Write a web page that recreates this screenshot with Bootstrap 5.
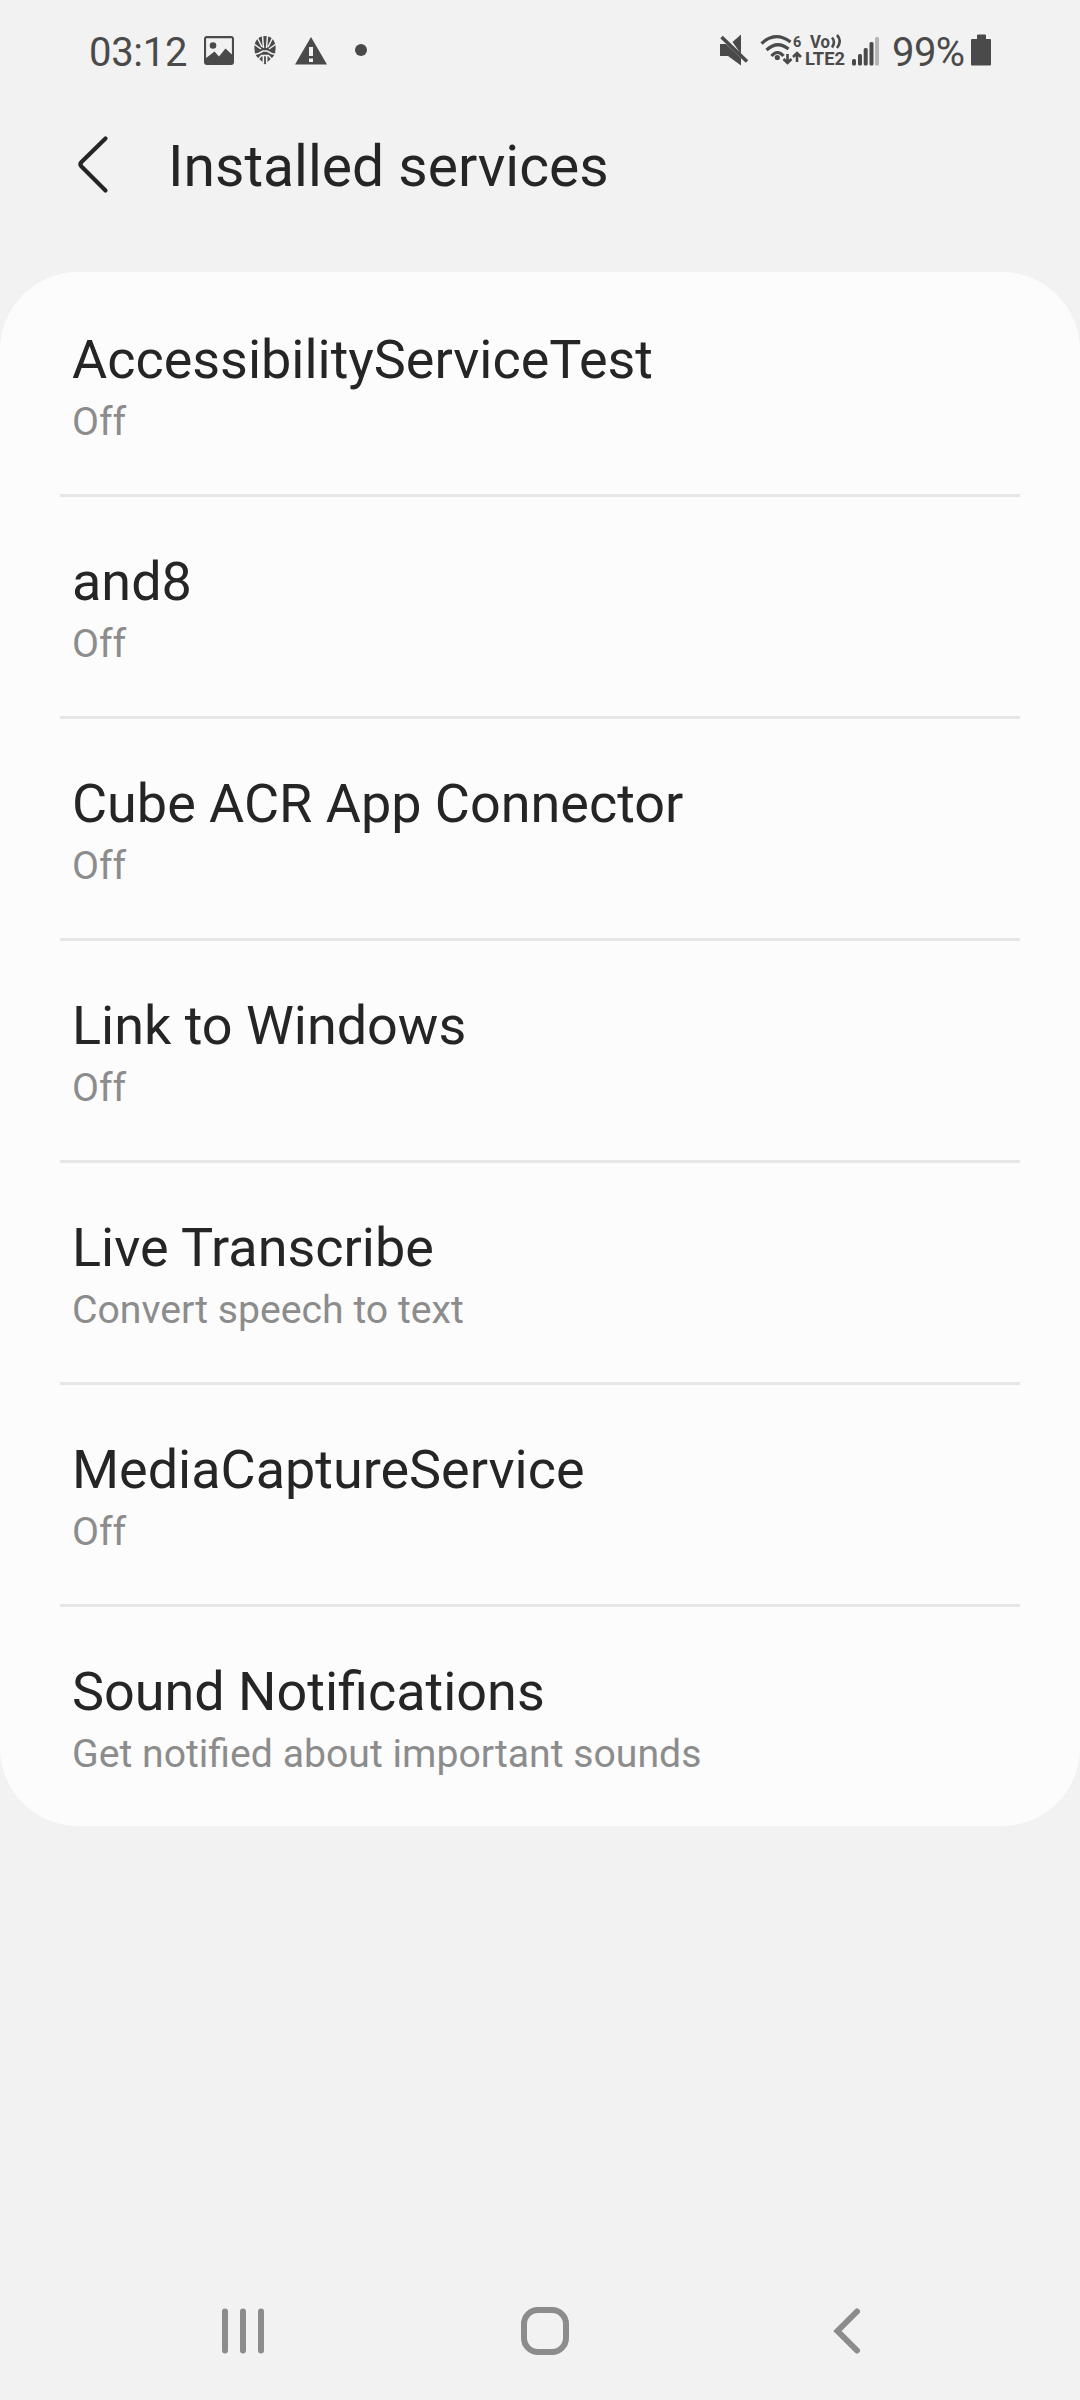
<!DOCTYPE html>
<html lang="en">
<head>
<meta charset="utf-8">
<meta name="viewport" content="width=device-width, initial-scale=1">
<title>Installed services</title>
<link href="https://cdn.jsdelivr.net/npm/bootstrap@5.3.0/dist/css/bootstrap.min.css" rel="stylesheet">
<style>
body{background:#f2f2f2;color:#252525;font-family:Roboto,sans-serif;min-height:2400px}
.screen{height:2400px}
.statusbar{height:102px;color:#4a4a4a;padding:0 87px 0 89px}
.statusbar .clock{font-size:40px;line-height:105px;width:104px;letter-spacing:-.3px}
.statusbar .charge{font-size:40px;line-height:105px;width:79px;letter-spacing:-.6px}
.topbar{height:170px;padding:0 0 42px 76px}
.topbar h1{font-size:57px;font-weight:400;line-height:1;padding-left:58px}
.back-arrow{margin-top:-4px}
.services{border-radius:78px;background:#fcfcfc;overflow:hidden}
.services .list-group-item{height:222px;border:0;padding:0 60px;background:transparent;color:inherit}
.service-body{border-top:3px solid #e6e6e6;padding:53px 12px 0;height:222px}
.list-group-item:first-child .service-body{border-color:transparent}
.service-name{font-size:53.95px;line-height:63px;white-space:nowrap}
.service-state{font-size:39.2px;line-height:46px;color:#8c8c8c;margin-top:8px;white-space:nowrap}
.navkeys{height:138px;padding:0 217px 0 218px}
.home-key{margin-right:9px}
svg{display:block;flex:none}
</style>
</head>
<body>
<div class="screen d-flex flex-column">
  <header class="statusbar d-flex justify-content-between">
    <div class="d-flex">
      <span class="clock">03:12</span>
      <svg width="180" height="102" viewBox="193 0 180 102" fill="#4a4a4a">
        <path fill-rule="evenodd" d="M207 36h24a3 3 0 0 1 3 3v23a3 3 0 0 1-3 3h-24a3 3 0 0 1-3-3V39a3 3 0 0 1 3-3zm-.9 2.200V58l8.400-6.500 4.500 5 6.500-8 6.400 6V38.200z"/>
        <circle cx="213" cy="45.500" r="3.300"/>
        <path d="M265 36c6 0 10 4 10.500 10 .5 3-.5 5-.3 7-1 3-4 6-6.700 8l-3.500 3.500-3.500-3.500c-2.700-2-5.700-5-6.700-8 .2-2-.8-4-.3-7 .5-6 4.500-10 10.500-10z"/>
        <g fill="none" stroke="#f2f2f2" stroke-width="1.500">
          <path d="M262.500 36l1 12M267.500 36l-1 12M257.500 38l4.500 9M272.500 38l-4.500 9M254 44l7 5M276 44l-7 5"/>
          <path d="M254 54.500l4.500-1 4.500-2.500h4l4.500 2.500 4.500 1M257.500 60l4-4.500h7l4 4.500M263.300 56v7M266.700 56v7" stroke-width="1.600"/>
        </g>
        <path fill-rule="evenodd" d="M311 37l16 27.500h-32zM309 47v9h4v-9zM309 58.500v3.500h4v-3.500z"/>
        <circle cx="361" cy="50" r="6"/>
      </svg>
    </div>
    <div class="d-flex">
      <svg width="177" height="102" viewBox="715 0 177 102" fill="#4a4a4a">
        <path d="M720 44h6l15 14v7.500l-13-9.500h-8zM741 34.500v19.500l-8.500-12z"/>
        <path d="M721.500 37l25.500 24.500" stroke="#4a4a4a" stroke-width="3.600"/>
        <g fill="none" stroke="#4a4a4a" stroke-width="3.200">
          <path d="M761.500 43.500q14-13 29-1.500M766.500 50q11-10 22-1M771.500 56q6-7 12 0"/>
          <path d="M787.500 54v9M783.500 59l4 4 4-4M797 62v-9M793 57l4-4 4 4" stroke-width="2.600"/>
        </g>
        <circle cx="777.300" cy="57.500" r="2.600"/>
        <text x="793" y="46.500" font-size="14.500" font-weight="700">6</text>
        <text x="810" y="47.500" font-size="17.500" font-weight="700" textLength="20" lengthAdjust="spacingAndGlyphs">Vo</text>
        <path d="M832 37.500q4 4.500 0 10M837 35q5.500 6 0 13" fill="none" stroke="#4a4a4a" stroke-width="2.600"/>
        <text x="805" y="65" font-size="17.800" font-weight="700" textLength="40" lengthAdjust="spacingAndGlyphs">LTE2</text>
        <rect x="852" y="59" width="4" height="6.500" rx="1.500"/>
        <rect x="858" y="54" width="4" height="11.500" rx="1.500"/>
        <rect x="863.700" y="48" width="4" height="17.500" rx="1.500"/>
        <rect x="869.500" y="42" width="4" height="23.500" rx="1.500"/>
        <rect x="875" y="37" width="4" height="28.500" rx="1.500" fill="#b5b5b5"/>
      </svg>
      <span class="charge text-nowrap">99%</span>
      <svg width="22" height="102" viewBox="971 0 22 102" fill="#4a4a4a"><path d="M978 34.500h7q1 0 1 1V39h4q1 0 1 1v24.500q0 1-1 1h-18q-1 0-1-1V40q0-1 1-1h5v-3.500q0-1 1-1z"/></svg>
    </div>
  </header>
  <div class="topbar d-flex align-items-center">
    <svg class="back-arrow" width="34" height="60" viewBox="76 134 34 60" fill="none" stroke="#252525" stroke-width="4.200" stroke-linecap="round" stroke-linejoin="round"><path d="M105.500 138.500L81.500 162q-2.200 2.200 0 4.500l24 24"/></svg>
    <h1 class="m-0">Installed services</h1>
  </div>
  <main class="services list-group list-group-flush">
    <div class="list-group-item"><div class="service-body"><div class="service-name">AccessibilityServiceTest</div><div class="service-state">Off</div></div></div>
    <div class="list-group-item"><div class="service-body"><div class="service-name">and8</div><div class="service-state">Off</div></div></div>
    <div class="list-group-item"><div class="service-body"><div class="service-name">Cube ACR App Connector</div><div class="service-state">Off</div></div></div>
    <div class="list-group-item"><div class="service-body"><div class="service-name">Link to Windows</div><div class="service-state">Off</div></div></div>
    <div class="list-group-item"><div class="service-body"><div class="service-name">Live Transcribe</div><div class="service-state">Convert speech to text</div></div></div>
    <div class="list-group-item"><div class="service-body"><div class="service-name">MediaCaptureService</div><div class="service-state">Off</div></div></div>
    <div class="list-group-item"><div class="service-body"><div class="service-name">Sound Notifications</div><div class="service-state">Get notified about important sounds</div></div></div>
  </main>
  <nav class="navkeys d-flex justify-content-between align-items-center mt-auto">
    <svg width="50" height="50" viewBox="218 2306 50 50" stroke="#8c8c8c" stroke-width="6" stroke-linecap="round"><path d="M225 2311.500v39M243 2311.500v39M261 2311.500v39"/></svg>
    <svg class="home-key" width="54" height="54" viewBox="518 2304 54 54" fill="none" stroke="#8c8c8c" stroke-width="6"><rect x="524" y="2310" width="42" height="42" rx="14"/></svg>
    <svg width="32" height="50" viewBox="832 2306 32 50" fill="none" stroke="#8c8c8c" stroke-width="6" stroke-linecap="round"><path d="M858 2311.500L838.500 2331l19.500 19.500"/></svg>
  </nav>
</div>
<script src="https://cdn.jsdelivr.net/npm/bootstrap@5.3.0/dist/js/bootstrap.bundle.min.js"></script>
</body>
</html>
